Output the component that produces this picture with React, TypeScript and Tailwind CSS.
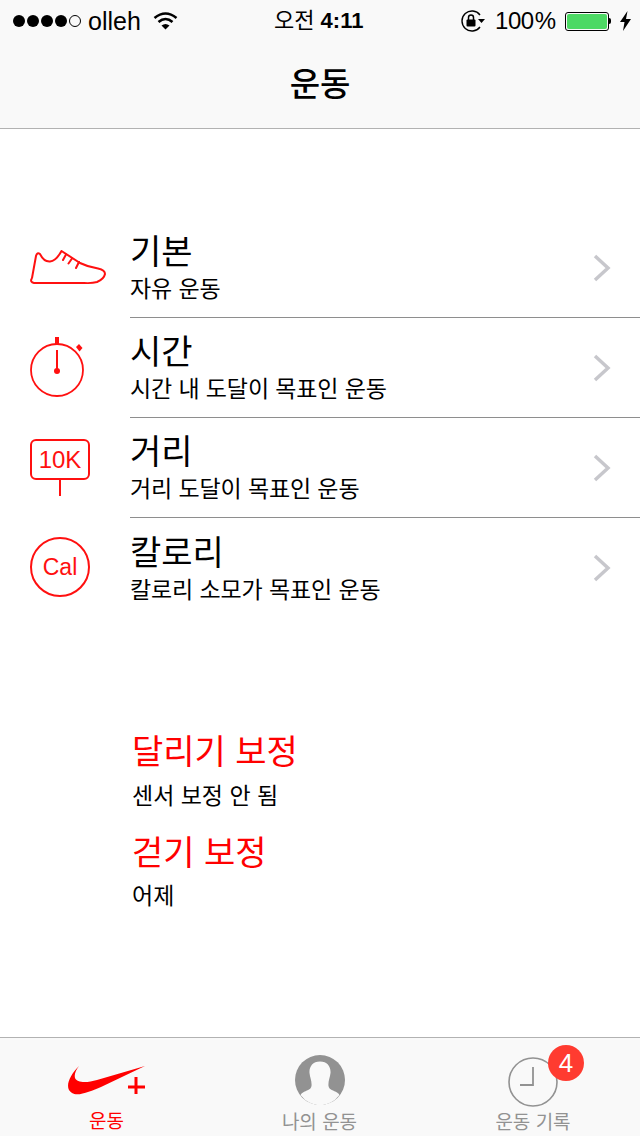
const FONT = "font-['Liberation_Sans','Noto_Sans_CJK_KR',sans-serif]"

function ShoeIcon() {
  return (
    <svg width="80" height="40" viewBox="28 248 80 40" fill="none" stroke="#ff1010" strokeWidth="2" strokeLinecap="round" strokeLinejoin="round">
      <path d="M32 278 L36 256 Q37 252 40 254 Q44 262 50 261.500 Q56 261 61.500 251 L80 263 Q88 267 98 268.500 Q105 270 105 274 Q104 279 97 282 Q92 283.500 84 283 L34 283 Q30 282 31.500 279" />
      <path d="M66 254.500 L63 260 M72 258.500 L68.500 263.500 M79 262 L76 268" />
    </svg>
  )
}

function StopwatchIcon() {
  return (
    <svg width="60" height="64" viewBox="28 334 60 64" fill="none" stroke="#ff1010">
      <circle cx="57" cy="370" r="26" strokeWidth="1.800" />
      <path d="M57 337 V344" strokeWidth="4" />
      <path d="M57 350 V370" strokeWidth="2" />
      <circle cx="57" cy="371" r="3" fill="#ff1010" stroke="none" />
      <path d="M76 347 L79 344 L82.500 348 L79.500 351.500 Z" fill="#ff1010" stroke="none" />
    </svg>
  )
}

function DistanceIcon() {
  return (
    <div className="flex w-[60px] flex-col items-center">
      <div className="flex h-[41px] w-[60px] items-center justify-center rounded-[6px] border-2 border-[#ff1010] text-[24px] leading-none text-[#ff1010]">
        10K
      </div>
      <div className="h-[16px] w-[2px] bg-[#ff1010]" />
    </div>
  )
}

function CalIcon() {
  return (
    <div className="flex h-[60px] w-[60px] items-center justify-center rounded-full border-2 border-[#ff1010] text-[23px] leading-none text-[#ff1010]">
      Cal
    </div>
  )
}

const ROWS = [
  { title: '기본', sub: '자유 운동', icon: <ShoeIcon />, box: 'pl-[28px] pt-[30px]' },
  { title: '시간', sub: '시간 내 도달이 목표인 운동', icon: <StopwatchIcon />, box: 'pl-[28px] pt-[16px]' },
  { title: '거리', sub: '거리 도달이 목표인 운동', icon: <DistanceIcon />, box: 'pl-[30px] pt-[21px]' },
  { title: '칼로리', sub: '칼로리 소모가 목표인 운동', icon: <CalIcon />, box: 'pl-[30px] pt-[19px]' },
]

function StatusBar() {
  return (
    <div className="relative flex h-[42px] items-center justify-between pl-[13px] pr-[9px] text-[24px] leading-none text-black">
      <div className="flex items-center">
        <div className="flex items-center gap-[2px]">
          <span className="h-[12px] w-[12px] rounded-full bg-black" />
          <span className="h-[12px] w-[12px] rounded-full bg-black" />
          <span className="h-[12px] w-[12px] rounded-full bg-black" />
          <span className="h-[12px] w-[12px] rounded-full bg-black" />
          <span className="h-[12px] w-[12px] rounded-full border border-black" />
        </div>
        <span className="ml-[7px] text-[25px]">olleh</span>
        <svg className="ml-[12px]" width="25" height="20" viewBox="0 0 25 20" fill="none" stroke="#000" strokeWidth="2.600">
          <path d="M1.500 7 Q12.500 -2 23.500 7" />
          <path d="M5.500 11 Q12.500 5 19.500 11" />
          <path d="M12.500 18.500 L8.500 14.500 Q12.500 11.500 16.500 14.500 Z" fill="#000" stroke="none" />
        </svg>
      </div>
      <div className="absolute left-[274px] top-[10px] text-[22px] font-bold">
        <span className="font-normal">오전</span> 4:11
      </div>
      <div className="flex items-center">
        <svg width="26" height="22" viewBox="0 0 26 22" fill="none" stroke="#000">
          <path d="M20 5 A10 10 0 1 0 20 17" strokeWidth="1.400" />
          <path d="M18 9 H25 L21.500 13 Z" fill="#000" stroke="none" />
          <rect x="6.500" y="9.500" width="9" height="7" rx="1" fill="#000" stroke="none" />
          <path d="M8.500 10 V7.500 A2.500 2.500 0 0 1 13.500 7.500 V10" strokeWidth="1.500" />
        </svg>
        <span className="ml-[9px] tracking-[-0.5px]">100</span>
        <span className="ml-[1px]">%</span>
        <div className="ml-[9px] flex h-[19px] w-[44px] rounded-[3px] border border-black p-[1px]">
          <div className="flex-1 rounded-[2px] bg-[#4cd964]" />
        </div>
        <div className="h-[6px] w-[2px] rounded-r-full bg-black" />
        <svg className="ml-[9px]" width="11" height="20" viewBox="0 0 11 20" fill="#000">
          <path d="M7.500 0 L0 11 H4.500 L3 20 L11 8 H6 Z" />
        </svg>
      </div>
    </div>
  )
}

function MenuRow({ title, sub, icon, box, last }: { title: string; sub: string; icon: React.ReactNode; box: string; last: boolean }) {
  return (
    <div className="flex h-[100px]">
      <div className={`w-[130px] shrink-0 ${box}`}>{icon}</div>
      <div className={`flex flex-1 items-center pr-[28px] ${last ? '' : 'border-b border-[#8e8e8e]'}`}>
        <div className="flex-1">
          <div className="text-[34px] leading-[38px] text-black">{title}</div>
          <div className="mt-[5px] text-[23px] leading-[26px] tracking-[-0.1px] text-black">{sub}</div>
        </div>
        <svg width="20" height="30" viewBox="0 0 20 30" fill="none" stroke="#c7c7cc" strokeWidth="3.500">
          <path d="M3 3 L16 15 L3 27" />
        </svg>
      </div>
    </div>
  )
}

function TabBar() {
  return (
    <div className="flex h-[99px] border-t border-[#b2b2b2] bg-[#f9f9f9] text-[19px] leading-none text-[#929292]">
      <div className="flex w-[213px] flex-col items-center">
        <svg className="mt-[26px]" width="80" height="38" viewBox="66 1064 80 38">
          <path d="M78 1066 C68 1076 63 1088 71 1093 C77 1097 90 1091 100 1087 L144 1066 L96 1080 C86 1083 76 1083 74 1078 C73 1074 75 1070 78 1066 Z" fill="#ff0000" />
          <path d="M135 1077 V1094 M127 1087 H144" stroke="#ff0000" strokeWidth="3" fill="none" />
        </svg>
        <span className="mt-[10px] text-[#ff0000]">운동</span>
      </div>
      <div className="flex w-[213px] flex-col items-center">
        <svg className="mt-[17px]" width="50" height="50" viewBox="0 0 50 50">
          <circle cx="25" cy="25" r="25" fill="#929292" />
          <path d="M25 6.500 C17.500 6.500 14 12 14.500 18 C15 23 17 26 16.500 31 C16 35 11 35.500 8 37.500 C6 39 5.500 39.500 6 40.500 A23.500 23.500 0 0 0 44 40.500 C44.500 39.500 44 39 42 37.500 C39 35.500 34 35 33.500 31 C33 26 35 23 35.500 18 C36 12 32.500 6.500 25 6.500 Z" fill="#f9f9f9" />
        </svg>
        <span className="mt-[8px]">나의 운동</span>
      </div>
      <div className="relative flex w-[214px] flex-col items-center">
        <svg className="mt-[19px]" width="50" height="50" viewBox="0 0 50 50" fill="none" stroke="#929292">
          <circle cx="25" cy="25" r="24" strokeWidth="1.600" />
          <path d="M25 10 V28 H12" strokeWidth="1.800" />
        </svg>
        <span className="mt-[6px]">운동 기록</span>
        <div className="absolute left-[122px] top-[7px] flex h-[36px] w-[36px] items-center justify-center rounded-full bg-[#ff3b30] text-[26px] text-white">
          4
        </div>
      </div>
    </div>
  )
}

export default function App() {
  return (
    <div className={`flex h-[1136px] w-[640px] flex-col overflow-hidden bg-white ${FONT}`}>
      <div className="h-[129px] shrink-0 border-b border-[#b2b2b2] bg-[#f9f9f9]">
        <StatusBar />
        <div className="flex h-[84px] items-center justify-center text-[33px] font-medium leading-none text-black">
          운동
        </div>
      </div>
      <div className="flex-1 pt-[89px]">
        {ROWS.map((row, i) => (
          <MenuRow key={i} {...row} last={i === ROWS.length - 1} />
        ))}
        <div className="pl-[132px] pt-[114px]">
          <div className="text-[34px] leading-[40px] text-[#ff0000]">달리기 보정</div>
          <div className="mt-[10px] text-[23px] leading-[28px] text-black">센서 보정 안 됨</div>
          <div className="mt-[23px] text-[34px] leading-[40px] text-[#ff0000]">걷기 보정</div>
          <div className="mt-[9px] text-[23px] leading-[28px] text-black">어제</div>
        </div>
      </div>
      <TabBar />
    </div>
  )
}
